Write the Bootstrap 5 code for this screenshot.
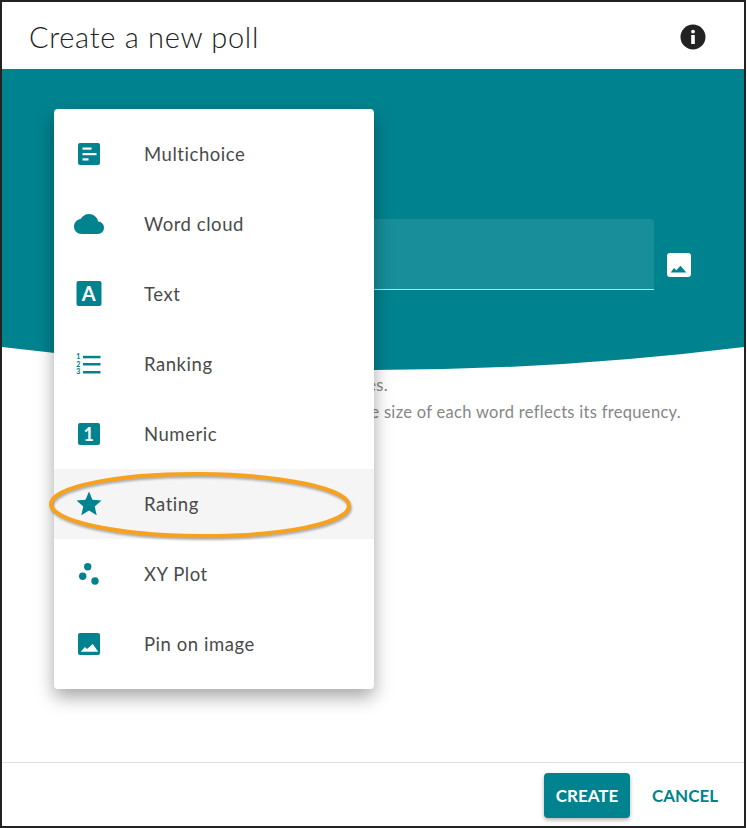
<!DOCTYPE html>
<html lang="en">
<head>
  <meta charset="UTF-8" />
  <meta name="viewport" content="width=device-width, initial-scale=1.0"/>
  <title>Create a new poll</title>
  <link href="https://cdn.jsdelivr.net/npm/bootstrap@5.3.0/dist/css/bootstrap.min.css" rel="stylesheet"/>
  <style>
    body {
      margin: 0;
      background: #fff;
      font-family: "Lato", "Liberation Sans", sans-serif;
      color: #3c3c3c;
    }
    .poll-frame {
      position: relative;
      width: 746px;
      height: 828px;
      border: 2px solid #222;
      overflow: hidden;
    }
    .poll-head {
      height: 67px;
      padding: 3px 38px 0 27px;
    }
    .poll-title {
      font-size: 29px;
      font-weight: 300;
      letter-spacing: 0.7px;
      color: #222;
      margin: 0;
    }
    .poll-band {
      background: #00838f;
      height: 276px;
      padding: 150px 54px 0 52px;
      gap: 13px;
    }
    .poll-field {
      width: 600px;
      height: 71px;
      background: rgba(255, 255, 255, 0.09);
      border-bottom: 1px solid #b9e2e6;
      border-radius: 4px 4px 0 0;
    }
    .poll-pic {
      margin-top: 34px;
    }
    .poll-curve {
      display: block;
      margin-top: -1px;
    }
    .poll-hints {
      margin-top: 2px;
      font-size: 16.5px;
      line-height: 27px;
      color: #868686;
      letter-spacing: 0.3px;
      white-space: nowrap;
    }
    .hint-short {
      padding-right: 356px;
    }
    .hint-long {
      padding-right: 63px;
    }
    .poll-menu {
      position: absolute;
      left: 52px;
      top: 107px;
      width: 320px;
      padding: 10px 0;
      background: #fff;
      border-radius: 4px;
      box-shadow: 0 8px 18px rgba(0, 0, 0, 0.35);
    }
    .poll-item {
      height: 70px;
      padding: 0 0 0 20px;
      gap: 40px;
      border: 0;
      font-size: 18.5px;
      letter-spacing: 0.55px;
      color: #4a4a4a;
    }
    .poll-item span {
      padding-top: 2px;
    }
    .poll-item.is-hover {
      background: #f5f5f5;
    }
    .poll-ring {
      position: absolute;
      left: 44px;
      top: 467px;
      filter: drop-shadow(1px 2px 1px rgba(0, 0, 0, 0.3));
    }
    .poll-foot {
      margin-top: auto;
      height: 64px;
      padding: 10px 26px 0 0;
      border-top: 1px solid #e0e0e0;
    }
    .poll-btn {
      font-family: "Lato", "Liberation Sans", sans-serif;
      font-size: 17px;
      font-weight: 700;
      border: 0;
      border-radius: 4px;
      height: 45px;
    }
    .poll-create {
      width: 86px;
      padding: 0;
      background: #00838f;
      color: #fff;
      box-shadow: 0 2px 4px rgba(0, 0, 0, 0.3);
    }
    .poll-cancel {
      padding: 0;
      margin-left: 22px;
      background: transparent;
      color: #00838f;
    }
    .icon-label {
      font-family: "Lato", "Liberation Sans", sans-serif;
      font-weight: 700;
      fill: #fff;
      text-anchor: middle;
    }
    .icon-digit {
      font-family: "Lato", "Liberation Sans", sans-serif;
      font-weight: 900;
      font-size: 7px;
      fill: #00838f;
      text-anchor: middle;
    }
  </style>
</head>
<body>
  <div class="poll-frame d-flex flex-column">

    <div class="poll-head d-flex align-items-center justify-content-between">
      <h1 class="poll-title">Create a new poll</h1>
      <svg width="26" height="26" viewBox="0 0 26 26">
        <circle cx="13" cy="13" r="12.5" fill="#222"/>
        <circle cx="13" cy="7.6" r="1.9" fill="#fff"/>
        <rect x="11.2" y="11" width="3.6" height="9" fill="#fff"/>
      </svg>
    </div>

    <div class="poll-band d-flex align-items-start">
      <div class="poll-field flex-shrink-0"></div>
      <svg class="poll-pic flex-shrink-0" width="24" height="24" viewBox="0 0 24 24">
        <rect width="24" height="24" rx="3" fill="#fff"/>
        <path d="M3.700 19.400 L7 15 L9.300 17.300 L13.500 12.700 L19.300 19.400 Z" fill="#00838f"/>
      </svg>
    </div>
    <svg class="poll-curve" width="742" height="26" viewBox="0 0 742 26">
      <path d="M0 0 H742 V3 Q371 49 0 3 Z" fill="#00838f"/>
    </svg>

    <div class="poll-hints">
      <div class="hint-short text-end">Pick one from predefined choices.</div>
      <div class="hint-long text-end">Participants' answers are shown; the size of each word reflects its frequency.</div>
    </div>

    <div class="poll-foot d-flex justify-content-end align-items-start">
      <button class="btn poll-btn poll-create" type="button">CREATE</button>
      <button class="btn poll-btn poll-cancel" type="button">CANCEL</button>
    </div>

    <div class="poll-menu list-group list-group-flush">
      <div class="list-group-item poll-item d-flex align-items-center">
        <svg width="30" height="30" viewBox="0 0 30 30">
          <rect x="4" y="4" width="22" height="22" rx="2" fill="#00838f"/>
          <rect x="8.500" y="8.500" width="9" height="2.200" fill="#fff"/>
          <rect x="8.500" y="14" width="14" height="2.200" fill="#fff"/>
          <rect x="8.500" y="19.300" width="6" height="2.200" fill="#fff"/>
        </svg>
        <span>Multichoice</span>
      </div>
      <div class="list-group-item poll-item d-flex align-items-center">
        <svg width="30" height="30" viewBox="0 0 24 24">
          <path d="M19.35 10.040C18.670 6.590 15.640 4 12 4 9.110 4 6.600 5.640 5.350 8.040 2.340 8.360 0 10.910 0 14c0 3.310 2.690 6 6 6h13c2.760 0 5-2.240 5-5 0-2.640-2.050-4.780-4.650-4.960z" fill="#00838f"/>
        </svg>
        <span>Word cloud</span>
      </div>
      <div class="list-group-item poll-item d-flex align-items-center">
        <svg width="30" height="30" viewBox="0 0 30 30">
          <rect x="2.500" y="2" width="25" height="25" rx="2" fill="#00838f"/>
          <text class="icon-label" x="15" y="22" font-size="20">A</text>
        </svg>
        <span>Text</span>
      </div>
      <div class="list-group-item poll-item d-flex align-items-center">
        <svg width="30" height="30" viewBox="0 0 30 30">
          <text class="icon-digit" x="4.500" y="9.500">1</text>
          <text class="icon-digit" x="4.500" y="17.500">2</text>
          <text class="icon-digit" x="4.500" y="25">3</text>
          <rect x="9" y="6.800" width="17.500" height="2.500" fill="#00838f"/>
          <rect x="9" y="14" width="17.500" height="2.500" fill="#00838f"/>
          <rect x="9" y="22" width="17.500" height="2.500" fill="#00838f"/>
        </svg>
        <span>Ranking</span>
      </div>
      <div class="list-group-item poll-item d-flex align-items-center">
        <svg width="30" height="30" viewBox="0 0 30 30">
          <rect x="4" y="4" width="22" height="22" rx="2" fill="#00838f"/>
          <text class="icon-label" x="15" y="21.500" font-size="18">1</text>
        </svg>
        <span>Numeric</span>
      </div>
      <div class="list-group-item poll-item is-hover d-flex align-items-center">
        <svg width="30" height="30" viewBox="0 0 24 24">
          <path d="M12 17.270L18.180 21l-1.640-7.030L22 9.240l-7.190-.610L12 2 9.190 8.630 2 9.240l5.460 4.730L5.820 21z" fill="#00838f"/>
        </svg>
        <span>Rating</span>
      </div>
      <div class="list-group-item poll-item d-flex align-items-center">
        <svg width="30" height="30" viewBox="0 0 30 30">
          <circle cx="13.700" cy="7.700" r="3.700" fill="#00838f"/>
          <circle cx="8.700" cy="17.300" r="3.700" fill="#00838f"/>
          <circle cx="21" cy="22" r="3.700" fill="#00838f"/>
        </svg>
        <span>XY Plot</span>
      </div>
      <div class="list-group-item poll-item d-flex align-items-center">
        <svg width="30" height="30" viewBox="0 0 30 30">
          <rect x="4" y="4" width="22" height="22" rx="2" fill="#00838f"/>
          <path d="M6.700 22.700 L11 18 L13 20 L18.700 15 L24.300 22.700 Z" fill="#fff"/>
        </svg>
        <span>Pin on image</span>
      </div>
    </div>

    <svg class="poll-ring" width="312" height="72" viewBox="0 0 312 72">
      <ellipse cx="154" cy="36" rx="149" ry="31" fill="none" stroke="#f8a11c" stroke-width="4" transform="rotate(0.400 154 36)"/>
    </svg>
  </div>
</body>
</html>
